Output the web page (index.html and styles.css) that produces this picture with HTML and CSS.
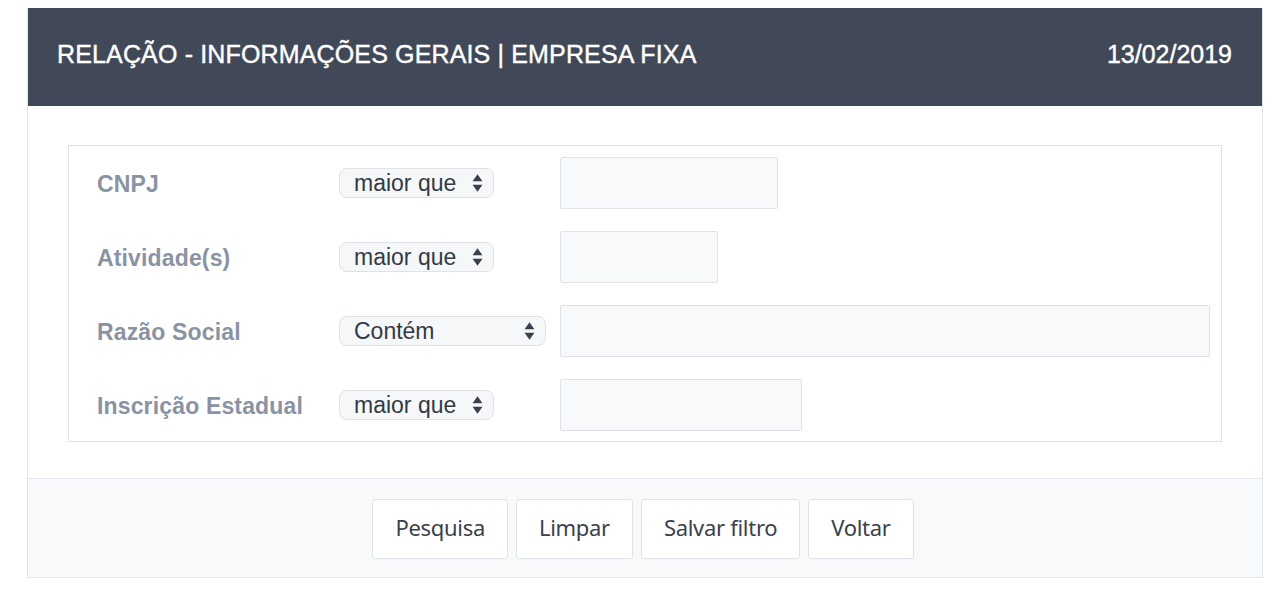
FILE: index.html
```html
<!DOCTYPE html>
<html lang="pt">
<head>
<meta charset="utf-8">
<link rel="stylesheet" href="styles.css">
</head>
<body>
<div class="card">
  <div class="card-header">
    <span class="title">RELAÇÃO - INFORMAÇÕES GERAIS | EMPRESA FIXA</span>
    <span class="date">13/02/2019</span>
  </div>
  <div class="card-body">
    <div class="filters">
      <div class="row">
        <span class="label">CNPJ</span>
        <div class="select sel-short"><span>maior que</span><svg class="arrows" viewBox="0 0 10 18"><path d="M5 1 L9.5 7.5 H0.5 Z M5 17 L9.5 10.5 H0.5 Z"/></svg></div>
        <div class="input w-cnpj"></div>
      </div>
      <div class="row">
        <span class="label">Atividade(s)</span>
        <div class="select sel-short"><span>maior que</span><svg class="arrows" viewBox="0 0 10 18"><path d="M5 1 L9.5 7.5 H0.5 Z M5 17 L9.5 10.5 H0.5 Z"/></svg></div>
        <div class="input w-ativ"></div>
      </div>
      <div class="row">
        <span class="label">Razão Social</span>
        <div class="select sel-long"><span>Contém</span><svg class="arrows" viewBox="0 0 10 18"><path d="M5 1 L9.5 7.5 H0.5 Z M5 17 L9.5 10.5 H0.5 Z"/></svg></div>
        <div class="input w-razao"></div>
      </div>
      <div class="row">
        <span class="label">Inscrição Estadual</span>
        <div class="select sel-short"><span>maior que</span><svg class="arrows" viewBox="0 0 10 18"><path d="M5 1 L9.5 7.5 H0.5 Z M5 17 L9.5 10.5 H0.5 Z"/></svg></div>
        <div class="input w-ie"></div>
      </div>
    </div>
  </div>
  <div class="card-footer">
    <button class="btn">Pesquisa</button>
    <button class="btn">Limpar</button>
    <button class="btn">Salvar filtro</button>
    <button class="btn">Voltar</button>
  </div>
</div>
</body>
</html>
```
FILE: styles.css
```css
html, body {
  margin: 0;
  padding: 0;
  background: #ffffff;
}
body {
  padding: 8px 21px 0 27px;
  font-family: "Liberation Sans", Arial, sans-serif;
}
.card {
  border: 1px solid #e2e5ea;
  border-top: none;
  background: #ffffff;
}
.card-header {
  box-sizing: border-box;
  height: 98px;
  background: #414958;
  color: #ffffff;
  display: flex;
  align-items: center;
  justify-content: space-between;
  padding: 0 30px 5px 29px;
  font-size: 25px;
  -webkit-text-stroke: 0.4px #ffffff;
}
.title {
  letter-spacing: 0.15px;
}
.card-body {
  padding: 39px 40px 36px 40px;
}
.filters {
  border: 1px solid #dfe3e8;
  padding: 11px 0 10px 28px;
  display: flex;
  flex-direction: column;
  gap: 22px;
}
.row {
  display: grid;
  grid-template-columns: 242px 221px 1fr;
  align-items: center;
  height: 52px;
}
.label {
  color: #8a93a3;
  font-weight: bold;
  font-size: 23px;
  letter-spacing: 0.15px;
  padding-top: 3px;
}
.select {
  box-sizing: border-box;
  height: 30px;
  border: 1px solid #dee2e7;
  border-radius: 8px;
  background: #f6f7f9;
  display: flex;
  align-items: center;
  justify-content: space-between;
  padding: 0 10px 0 14px;
  font-size: 23px;
  color: #333a46;
}
.sel-short { width: 155px; }
.sel-long { width: 207px; }
.arrows {
  width: 11px;
  height: 20px;
  fill: #3a414c;
}
.input {
  box-sizing: border-box;
  height: 52px;
  border: 1px solid #dfe3e8;
  border-radius: 2px;
  background: #f8f9fb;
}
.w-cnpj { width: 218px; }
.w-ativ { width: 158px; }
.w-razao { width: 650px; }
.w-ie { width: 242px; }
.card-footer {
  border-top: 1px solid #e2e5ea;
  background: #f8f9fb;
  height: 99px;
  box-sizing: border-box;
  padding-top: 20px;
  display: flex;
  justify-content: center;
  align-items: flex-start;
  gap: 8px;
  padding-right: 4px;
}
.btn {
  box-sizing: border-box;
  height: 60px;
  background: #ffffff;
  border: 1px solid #dfe3e8;
  border-radius: 3px;
  font-family: "Noto Sans", "Open Sans", sans-serif;
  font-size: 22px;
  color: #3a414d;
  padding: 0 22px 4px;
  letter-spacing: -0.3px;
}
```
